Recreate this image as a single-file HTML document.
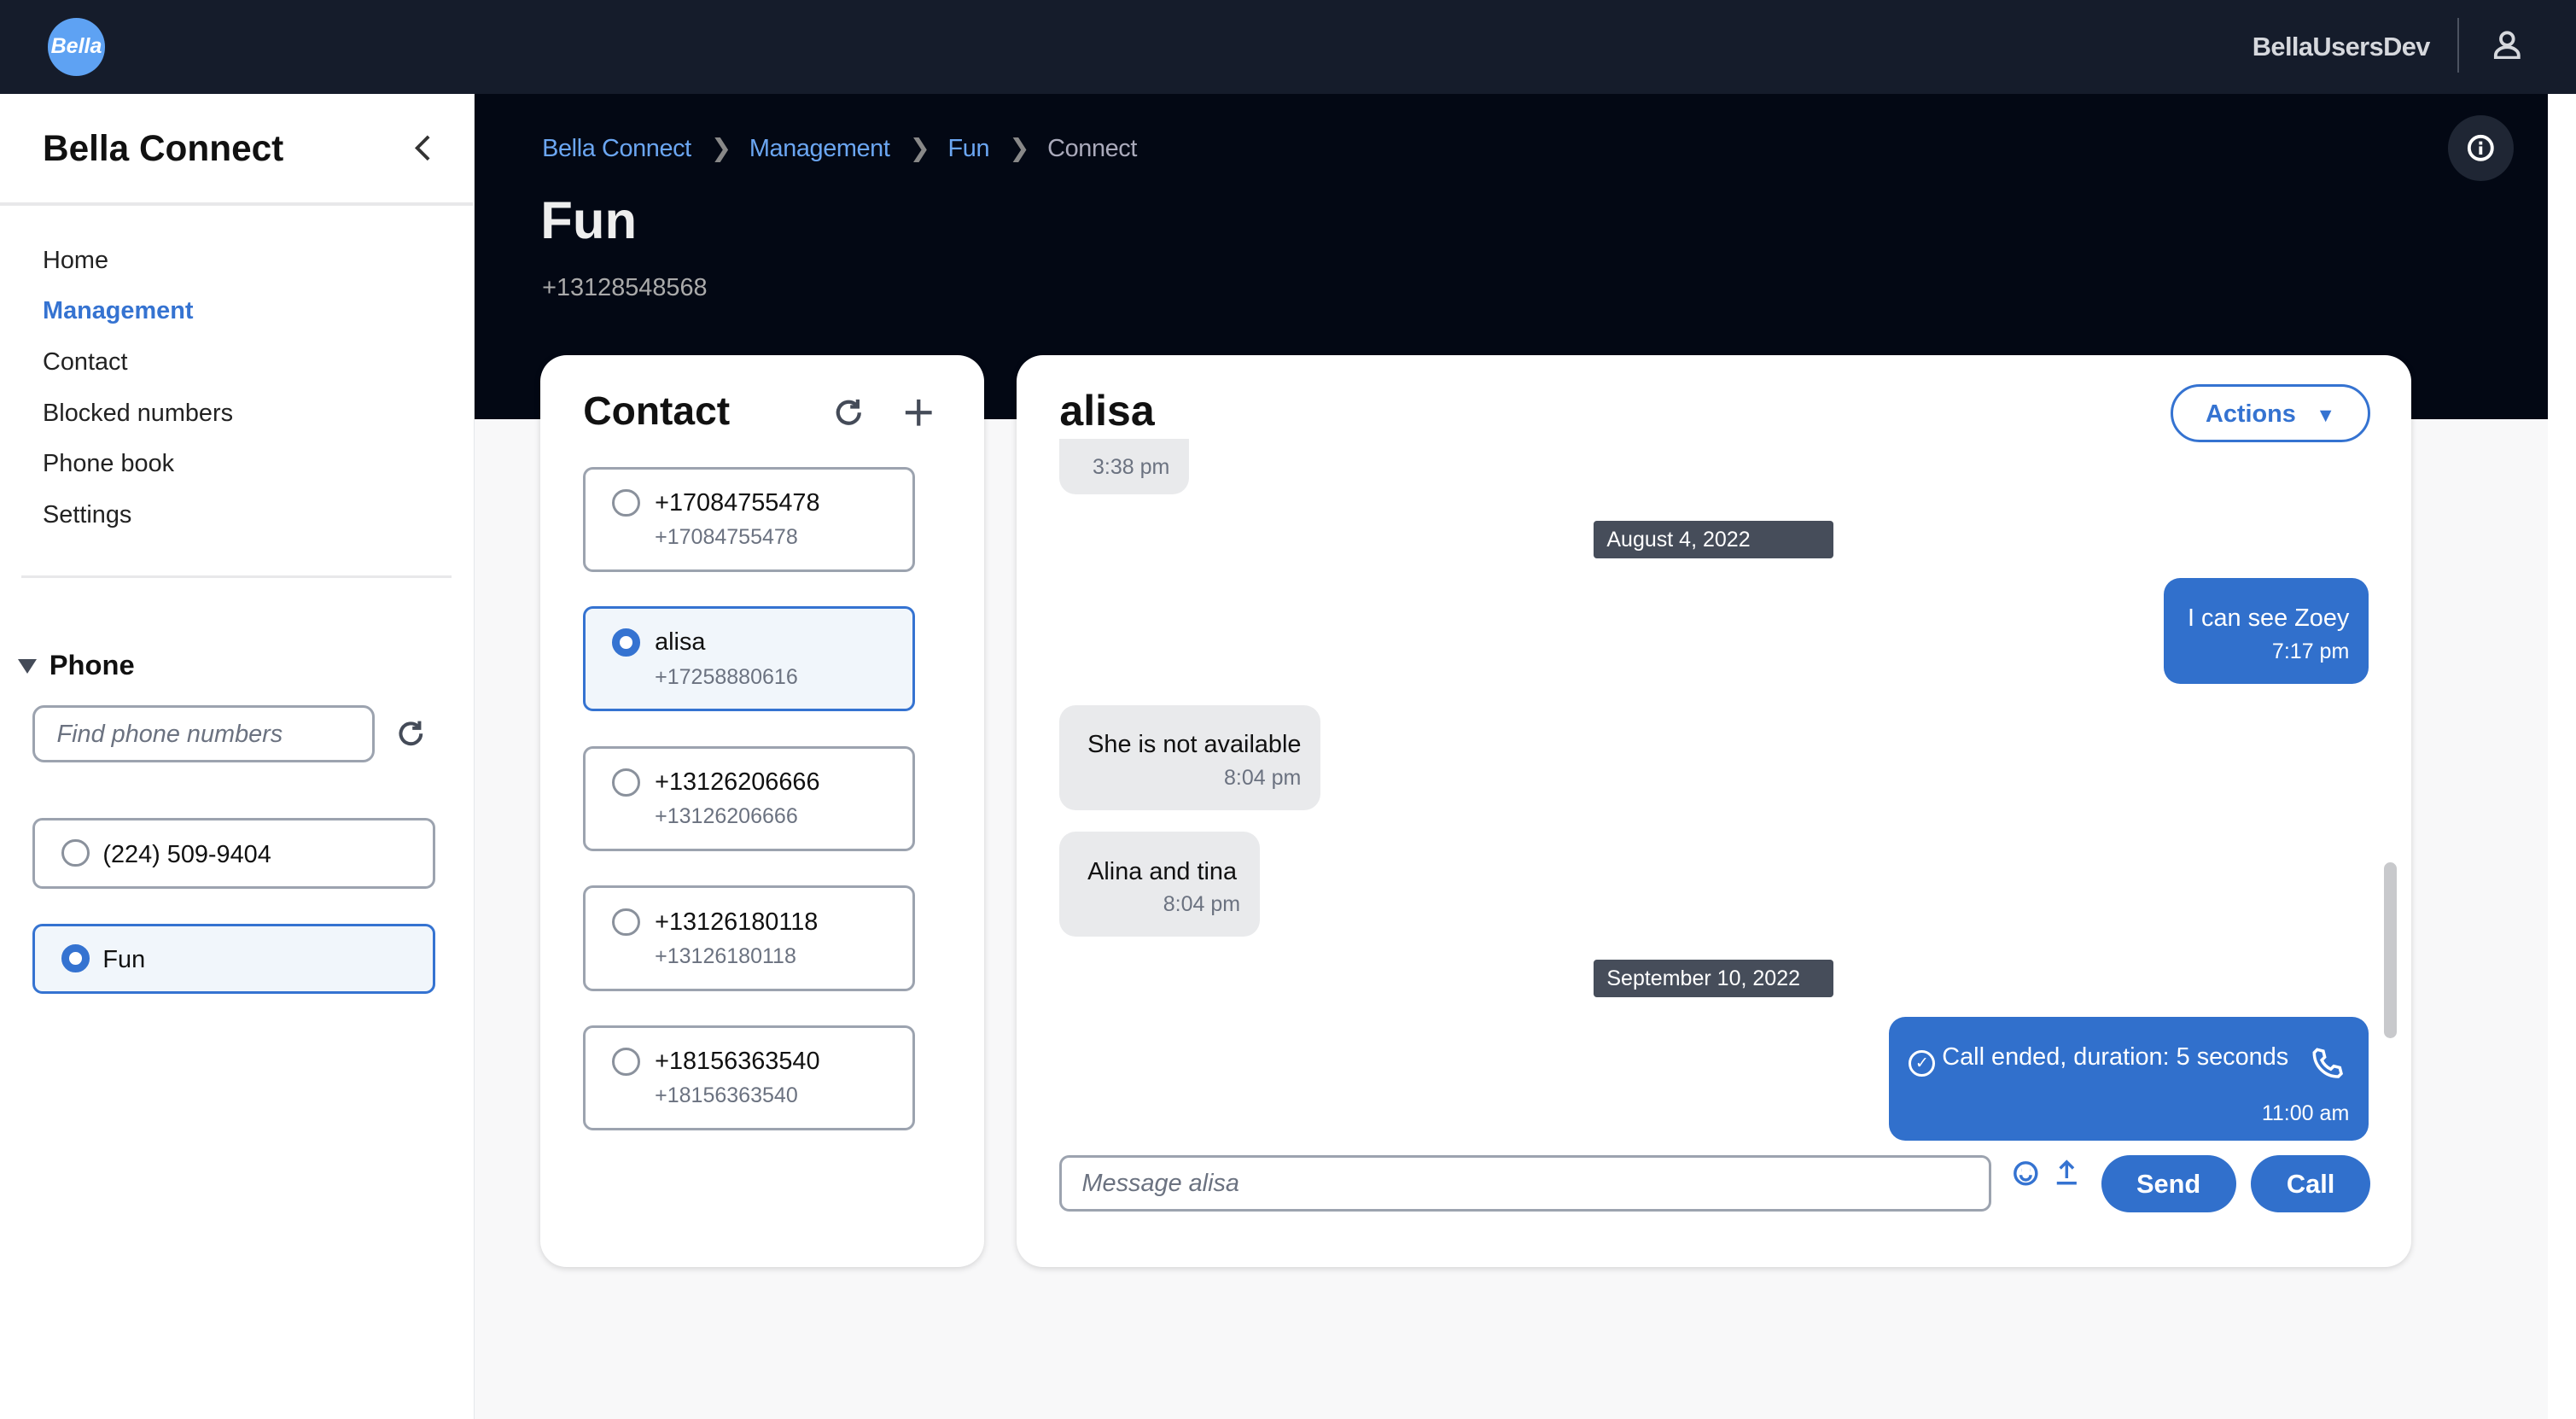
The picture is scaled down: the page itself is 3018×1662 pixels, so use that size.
<!DOCTYPE html>
<html><head><meta charset="utf-8"><style>
*{box-sizing:border-box;margin:0;padding:0}
html,body{width:3018px;height:1662px;overflow:hidden;background:#f8f8f9}
#w{zoom:1.9247;width:1568px;height:864px;position:relative;font-family:"Liberation Sans",sans-serif;color:#111}
.a{position:absolute}
.top{left:0;top:0;width:1568px;height:57px;background:#151c2b}
.side{left:0;top:57px;width:289px;height:807px;background:#fff;border-right:1px solid #e5e7eb}
.nav{left:26px;font-size:15px;color:#222}
.hdr{left:289px;top:57px;width:1262px;height:198px;background:#030814}
.card{background:#fff;border-radius:16px;box-shadow:0 1px 4px rgba(0,0,0,.15)}
.ci{left:355px;width:202px;height:64px;border:2px solid #9ca3af;border-radius:6px;background:#fff}
.ci .r{position:absolute;left:16px;top:12px;width:17px;height:17px;border:2px solid #8a919c;border-radius:50%}
.ci .n{position:absolute;left:42px;top:12px;font-size:15px;color:#111}
.ci .s{position:absolute;left:42px;top:34px;font-size:13px;color:#6b7280}
.sel{border-color:#3573d1;background:#f1f6fb}
.sel .r{border:5px solid #3573d1;background:#fff}
.bub{border-radius:10px;font-size:15px;padding:0 12px 0 17px;white-space:nowrap}
.g{background:#e9eaec;color:#111}
.b{background:#3170cc;color:#fff}
.t{font-size:13px;text-align:right}
.g .t{color:#6b7280}
.date{background:#464d5a;color:#fff;font-size:13px;height:23px;width:146px;padding:4px 8px;border-radius:2px}
.btn{background:#3170cc;color:#fff;font-weight:bold;font-size:16px;border-radius:18px;text-align:center;line-height:35px;height:35px}
.sep{color:#888;margin:0 11px 0 12px}
</style></head><body><div id="w">
<div class="a top">
 <div class="a" style="left:29px;top:11px;width:35px;height:35px;border-radius:50%;background:#5ea2f3;color:#fff;font-style:italic;font-weight:bold;font-size:13px;text-align:center;line-height:35px">Bella</div>
 <div class="a" style="left:1371px;top:19px;font-size:16px;font-weight:bold;color:#d6d8dd;letter-spacing:-0.3px">BellaUsersDev</div>
 <div class="a" style="left:1496px;top:11px;width:1px;height:33px;background:#4b5260"></div>
 <svg class="a" style="left:1517px;top:18px" width="18" height="18" viewBox="0 0 18 18" fill="none" stroke="#d6d8dd" stroke-width="2"><circle cx="9" cy="5.5" r="3.8"/><path d="M2 17v-1.5a7 5 0 0 1 14 0V17Z"/></svg>
</div>
<div class="a side">
 <div class="a" style="left:26px;top:21px;font-size:22px;font-weight:bold">Bella Connect</div>
 <svg class="a" style="left:250px;top:24px" width="14" height="18" viewBox="0 0 14 18" fill="none" stroke="#333" stroke-width="2"><path d="M11 2L4 9l7 7"/></svg>
 <div class="a" style="left:0;top:66px;width:288px;height:2px;background:#e8e8ea"></div>
 <div class="a nav" style="top:93px">Home</div>
 <div class="a nav" style="top:124px;color:#3573d1;font-weight:bold">Management</div>
 <div class="a nav" style="top:155px">Contact</div>
 <div class="a nav" style="top:186px">Blocked numbers</div>
 <div class="a nav" style="top:217px">Phone book</div>
 <div class="a nav" style="top:248px">Settings</div>
 <div class="a" style="left:13px;top:293px;width:262px;height:2px;background:#e8e8ea"></div>
 <div class="a" style="left:11px;top:344px;width:0;height:0;border-left:6px solid transparent;border-right:6px solid transparent;border-top:9px solid #444b58"></div>
 <div class="a" style="left:30px;top:338px;font-size:17px;font-weight:bold">Phone</div>
 <div class="a" style="left:20px;top:372px;width:208px;height:35px;border:2px solid #9ca3af;border-radius:7px;font-style:italic;color:#6b7280;font-size:15px;padding:8px 13px">Find phone numbers</div>
 <svg class="a" style="left:241px;top:380px" width="19" height="19" viewBox="0 0 20 20" fill="none" stroke="#444b58" stroke-width="2.2"><path d="M16 10a6.5 6.5 0 1 1-2-4.7"/><path d="M15 2v4.5h-4.5" /></svg>
 <div class="a ci" style="left:20px;top:441px;width:245px;height:43px"><div class="r" style="left:16px;top:11px"></div><div class="n" style="left:41px;top:12px">(224) 509-9404</div></div>
 <div class="a ci sel" style="left:20px;top:505px;width:245px;height:43px"><div class="r" style="left:16px;top:11px"></div><div class="n" style="left:41px;top:12px">Fun</div></div>
</div>
<div class="a hdr">
 <div class="a" style="left:41px;top:24px;font-size:15px;color:#6ba6f2;white-space:nowrap;letter-spacing:-0.2px">Bella Connect<span class="sep">&#x276F;</span>Management<span class="sep">&#x276F;</span>Fun<span class="sep">&#x276F;</span><span style="color:#aab">Connect</span></div>
 <div class="a" style="left:40px;top:59px;font-size:32px;font-weight:bold;color:#eee">Fun</div>
 <div class="a" style="left:41px;top:110px;font-size:15px;color:#aaa">+13128548568</div>
 <div class="a" style="left:1201px;top:13px;width:40px;height:40px;border-radius:50%;background:#1f2634"></div>
 <svg class="a" style="left:1212px;top:24px" width="18" height="18" viewBox="0 0 18 18"><circle cx="9" cy="9" r="7" fill="none" stroke="#fff" stroke-width="2"/><rect x="8" y="8" width="2" height="5" fill="#fff"/><rect x="8" y="5" width="2" height="2" fill="#fff"/></svg>
</div>
<div class="a" style="left:1551px;top:57px;width:17px;height:807px;background:#fff"></div>
<div class="a card" style="left:329px;top:216px;width:270px;height:555px"></div>
<div class="a" style="left:355px;top:236px;font-size:24px;font-weight:bold">Contact</div>
<svg class="a" style="left:507px;top:241px" width="20" height="20" viewBox="0 0 20 20" fill="none" stroke="#444b58" stroke-width="2.2"><path d="M16 10a6.5 6.5 0 1 1-2-4.7"/><path d="M15 2v4.5h-4.5"/></svg>
<svg class="a" style="left:549px;top:241px" width="20" height="20" viewBox="0 0 20 20" stroke="#444b58" stroke-width="2.2"><path d="M10 2v16M2 10h16"/></svg>
<div class="a ci" style="top:284px"><div class="r"></div><div class="n">+17084755478</div><div class="s">+17084755478</div></div>
<div class="a ci sel" style="top:369px"><div class="r"></div><div class="n">alisa</div><div class="s">+17258880616</div></div>
<div class="a ci" style="top:454px"><div class="r"></div><div class="n">+13126206666</div><div class="s">+13126206666</div></div>
<div class="a ci" style="top:539px"><div class="r"></div><div class="n">+13126180118</div><div class="s">+13126180118</div></div>
<div class="a ci" style="top:624px"><div class="r"></div><div class="n">+18156363540</div><div class="s">+18156363540</div></div>

<div class="a card" style="left:619px;top:216px;width:849px;height:555px"></div>
<div class="a bub g" style="left:645px;top:262px;width:79px;height:39px;border-radius:0 0 10px 10px"><div class="t" style="padding-top:15px">3:38 pm</div></div>
<div class="a" style="left:640px;top:218px;width:800px;height:49px;background:#fff"></div>
<div class="a" style="left:645px;top:235px;font-size:26px;font-weight:bold">alisa</div>
<div class="a" style="left:1321px;top:234px;width:122px;height:35px;border:2px solid #3573d1;border-radius:18px;color:#3573d1;font-weight:bold;font-size:15px;padding:8px 0 0 20px">Actions <span style="font-size:12px;margin-left:8px">&#9660;</span></div>
<div class="a date" style="left:970px;top:317px">August 4, 2022</div>
<div class="a bub b" style="left:1317px;top:352px;width:125px;height:64px;padding:0 12px 0 12px"><div style="padding-top:16px;text-align:right">I can see Zoey</div><div class="t" style="color:#fff;padding-top:4px">7:17 pm</div></div>
<div class="a bub g" style="left:645px;top:429px;width:159px;height:64px"><div style="padding-top:16px">She is not available</div><div class="t" style="padding-top:4px">8:04 pm</div></div>
<div class="a bub g" style="left:645px;top:506px;width:122px;height:64px"><div style="padding-top:16px">Alina and tina</div><div class="t" style="padding-top:4px">8:04 pm</div></div>
<div class="a date" style="left:970px;top:584px">September 10, 2022</div>
<div class="a bub b" style="left:1150px;top:619px;width:292px;height:75px;padding-left:12px"><div style="padding-top:16px"><span style="display:inline-block;width:16px;height:16px;border:1.8px solid #fff;border-radius:50%;font-size:10px;text-align:center;line-height:13px;vertical-align:-2px">&#10003;</span> Call ended, duration: 5 seconds</div><div class="t" style="color:#fff;padding-top:15px">11:00 am</div>
<svg class="a" style="left:256px;top:17px" width="22" height="22" viewBox="0 0 24 24" fill="none" stroke="#fff" stroke-width="2"><path d="M5 3l4 1 1 4-2 2a12 12 0 0 0 6 6l2-2 4 1 1 4-2 2C10 21 3 14 3 5z"/></svg></div>
<div class="a" style="left:1451px;top:525px;width:8px;height:107px;border-radius:4px;background:#c8c9cc"></div>
<div class="a" style="left:645px;top:703px;width:567px;height:34px;border:2px solid #9ca3af;border-radius:6px;font-style:italic;color:#6b7280;font-size:15px;padding:7px 12px">Message alisa</div>
<svg class="a" style="left:1224px;top:705px" width="18" height="18" viewBox="0 0 18 18" fill="none" stroke="#3573d1" stroke-width="1.8"><circle cx="9" cy="9" r="6.5"/><path d="M6 10a3 3 0 0 0 6 0M6.5 7h.1M11.5 7h.1"/></svg>
<svg class="a" style="left:1249px;top:704px" width="18" height="18" viewBox="0 0 18 18" fill="none" stroke="#3573d1" stroke-width="1.8"><path d="M9 13V3M5 7l4-4 4 4M3 16h12"/></svg>
<div class="a btn" style="left:1279px;top:703px;width:82px">Send</div>
<div class="a btn" style="left:1370px;top:703px;width:73px">Call</div>
</div></body></html>
